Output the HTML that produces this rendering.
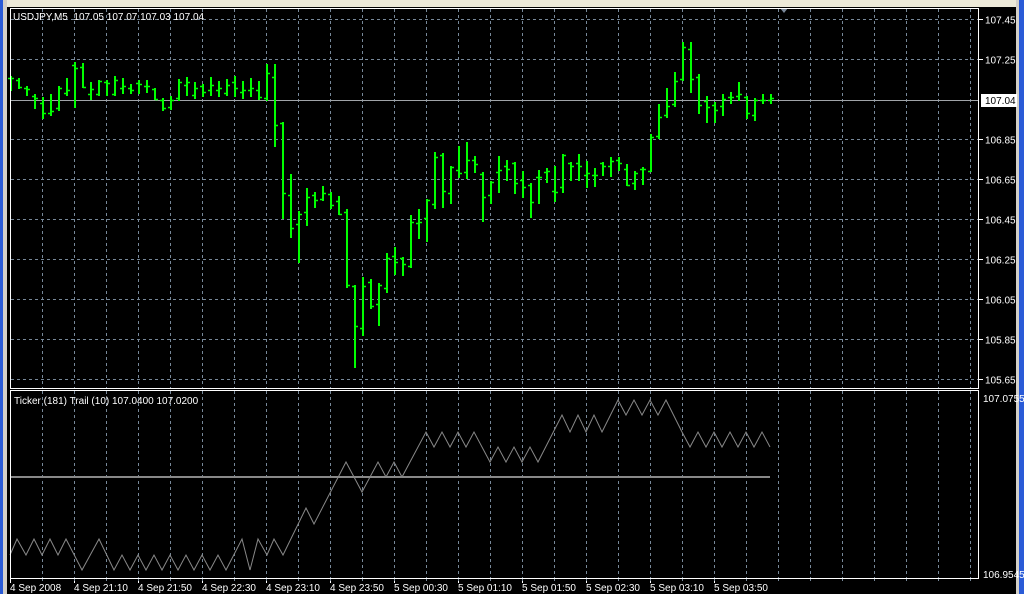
<!DOCTYPE html>
<html><head><meta charset="utf-8"><style>
html,body{margin:0;padding:0;background:#000;width:1024px;height:594px;overflow:hidden}
svg{display:block}
text{font-family:"Liberation Sans",sans-serif;font-size:10px;fill:#fff;white-space:pre}
</style></head><body>
<svg id="s" width="1024" height="594" xmlns="http://www.w3.org/2000/svg">
<rect x="0" y="0" width="1024" height="594" fill="#000"/>
<rect x="0" y="0" width="1024" height="7" fill="#ece9d8"/>
<rect x="0" y="0" width="3" height="594" fill="#2a5bd7"/>
<rect x="3" y="0" width="4" height="594" fill="#d4d0c8"/>
<rect x="1019" y="0" width="5" height="594" fill="#2a5bd7"/>
<rect x="1016" y="0" width="3" height="594" fill="#d4d0c8"/>
<rect x="780" y="7" width="8" height="3" fill="#000"/>
<polygon points="780,8 788,8 784,13" fill="#7a8899"/>
<g id="grid" stroke="#778899" stroke-width="1" stroke-dasharray="3,3" fill="none"></g>
<line x1="10" y1="100.5" x2="979" y2="100.5" stroke="#a0a4a8" stroke-width="1"/>
<line x1="10" y1="477" x2="770" y2="477" stroke="#888" stroke-width="2"/>
<g id="bars" stroke="#00ff00" stroke-width="2" fill="none"></g>
<polyline id="zz" fill="none" stroke="#888" stroke-width="1"/>
<rect x="10.5" y="8.5" width="968" height="380" fill="none" stroke="#fff"/>
<rect x="10.5" y="390.5" width="968" height="188" fill="none" stroke="#fff"/>
<text x="13" y="20">USDJPY,M5&#160; 107.05 107.07 107.03 107.04</text>
<text x="14" y="404">Ticker (181) Trail (10) 107.0400 107.0200</text>
<g id="ax"></g>
<rect x="981" y="94" width="36" height="13" fill="#fff"/>
<text x="985" y="104" style="fill:#000">107.04</text>
<text x="983" y="402">107.0755</text>
<text x="983" y="578">106.9545</text>
</svg>
<script>
var NS="http://www.w3.org/2000/svg";
function el(p,t,a,tx){var e=document.createElementNS(NS,t);for(var k in a)e.setAttribute(k,a[k]);if(tx)e.textContent=tx;document.getElementById(p).appendChild(e);}
for(var x=42.5;x<979;x+=32){el("grid","line",{x1:x,y1:9,x2:x,y2:388});el("grid","line",{x1:x,y1:391,x2:x,y2:578});}
var pl=["107.45","107.25",null,"106.85","106.65","106.45","106.25","106.05","105.85","105.65"];
for(var i=0;i<10;i++){var y=19.5+40*i;if(i!=2)el("grid","line",{x1:11,y1:y,x2:978,y2:y});
 if(pl[i]){el("ax","line",{x1:979,y1:y,x2:983,y2:y,stroke:"#fff"});el("ax","text",{x:985,y:y+4},pl[i]);}}
var lb=["4 Sep 2008","4 Sep 21:10","4 Sep 21:50","4 Sep 22:30","4 Sep 23:10","4 Sep 23:50","5 Sep 00:30","5 Sep 01:10","5 Sep 01:50","5 Sep 02:30","5 Sep 03:10","5 Sep 03:50"];
for(var i=0;i<lb.length;i++){var x=10+64*i;el("ax","line",{x1:x+0.5,y1:579,x2:x+0.5,y2:583,stroke:"#fff"});el("ax","text",{x:x,y:591},lb[i]);}
for(var x=42.5;x<979;x+=32){el("ax","line",{x1:x,y1:579,x2:x,y2:581,stroke:"#778899"});}
var B=[[77,90,78,78],[79,88,80,87],[87,95,88,89],[95,108,96,98],[98,118,103,113],[95,115,113,111],[87,110,108,88],[79,95,93,90],
[63,107,65,68],[64,87,67,87],[83,99,94,89],[81,95,94,81],[81,95,82,83],[77,95,94,80],[79,93,88,86],[85,93,88,90],
[81,93,83,84],[81,92,86,86],[89,99,89,99],[99,110,100,108],[97,109,107,100],[80,100,98,82],[78,95,85,82],[83,98,95,88],
[85,96,86,92],[78,95,90,85],[82,96,90,88],[80,95,93,85],[77,96,82,88],[82,98,92,90],[79,96,90,88],[82,99,90,97],
[65,100,98,73],[65,146,77,125],[123,218,123,193],[175,237,195,228],[212,262,224,214],[189,225,212,197],[193,207,195,200],[187,200,199,193],
[193,208,194,205],[197,214,201,214],[210,287,212,285],[286,367,286,326],[278,335,328,286],[280,308,282,306],[284,325,304,285],[254,292,288,258],
[248,274,256,262],[258,275,258,264],[216,267,266,222],[210,238,223,222],[200,241,218,200],[153,208,204,157],[154,207,155,191],[167,203,193,167],
[147,177,170,173],[143,178,172,160],[157,172,160,164],[173,221,174,197],[182,203,195,182],[157,192,172,170],[161,180,166,169],[163,193,163,183],
[172,197,180,187],[184,217,185,202],[171,203,177,177],[169,182,172,171],[167,201,191,192],[155,192,187,155],[163,180,163,166],[155,180,163,166],
[162,187,175,173],[169,186,175,175],[163,175,163,166],[158,176,166,161],[158,170,160,163],[165,185,169,185],[172,189,183,173],[168,184,169,169],
[135,171,171,137],[105,138,136,117],[89,117,115,106],[73,106,104,81],[43,80,79,47],[43,92,49,79],[75,113,77,105],[97,122,101,107],
[103,122,105,110],[95,115,106,99],[93,103,97,97],[83,100,96,94],[97,118,97,113],[99,120,115,100],[95,103,100,100],[95,103,100,98]];
for(var i=0;i<B.length;i++){var x=11+8*i,b=B[i];
 el("bars","line",{x1:x,y1:b[0]-1,x2:x,y2:b[1]+1});
 el("bars","line",{x1:x-3,y1:b[2]+0.5,x2:x,y2:b[2]+0.5,"stroke-width":1.5});
 el("bars","line",{x1:x,y1:b[3]+0.5,x2:x+3,y2:b[3]+0.5,"stroke-width":1.5});}
var Z=[[10,555],[17,539],[26,555],[34,539],[42,555],[50,539],[58,555],[66,539],[82,570],[99,539],[114,570],[122,555],[130,570],[138,555],[146,570],[154,555],[162,570],[170,555],[178,570],[186,555],[194,570],[202,555],[210,570],[218,555],[226,570],[242,539],[250,570],[258,539],[267,555],[274,539],[283,555],[306,508],[314,524],[346,462],[362,492],[378,462],[386,477],[394,462],[402,477],[410,462],[426,432],[434,447],[442,432],[450,447],[458,432],[466,447],[474,432],[490,462],[498,447],[506,462],[514,447],[522,462],[530,447],[538,462],[562,415],[570,432],[578,415],[586,432],[594,415],[602,432],[618,400],[626,415],[634,400],[642,415],[650,400],[658,415],[666,400],[682,432],[690,447],[698,432],[706,447],[714,432],[722,447],[730,432],[738,447],[746,432],[754,447],[762,432],[770,447]];
document.getElementById("zz").setAttribute("points",Z.map(function(p){return p.join(",")}).join(" "));
</script>
</body></html>
